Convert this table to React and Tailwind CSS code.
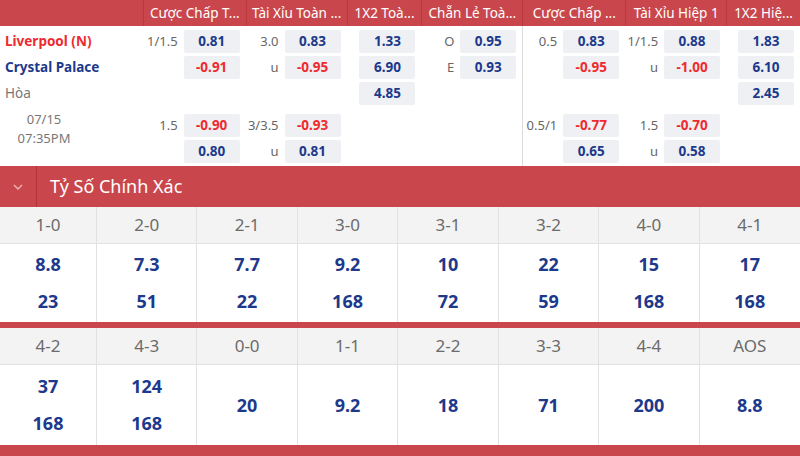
import React from "react";

const font = { fontFamily: '"Noto Sans", "Open Sans", Arial, sans-serif' };

const headers = [
  { label: "Cược Chấp T...", w: "w-[103px]" },
  { label: "Tài Xỉu Toàn ...", w: "w-[101px]" },
  { label: "1X2 Toà...", w: "w-[75px]" },
  { label: "Chẵn Lẻ Toà...", w: "w-[101px]" },
  { label: "Cược Chấp ...", w: "w-[103px]" },
  { label: "Tài Xỉu Hiệp 1", w: "w-[101px]" },
  { label: "1X2 Hiệ...", w: "w-[74px]" },
];

// each column: [row1, row2, row3, row4, row5], item = [label, value, red]
const columns = [
  [["1/1.5", "0.81"], ["", "-0.91", true], null, ["1.5", "-0.90", true], ["", "0.80"]],
  [["3.0", "0.83"], ["u", "-0.95", true], null, ["3/3.5", "-0.93", true], ["u", "0.81"]],
  [["", "1.33"], ["", "6.90"], ["", "4.85"], null, null],
  [["O", "0.95"], ["E", "0.93"], null, null, null],
  [["0.5", "0.83"], ["", "-0.95", true], null, ["0.5/1", "-0.77", true], ["", "0.65"]],
  [["1/1.5", "0.88"], ["u", "-1.00", true], null, ["1.5", "-0.70", true], ["u", "0.58"]],
  [["", "1.83"], ["", "6.10"], ["", "2.45"], null, null],
];

function Slot({ item }) {
  if (!item) return <div className="h-[23px]" />;
  const [label, value, red] = item;
  return (
    <div className="flex h-[23px] items-center justify-end">
      <span className="mr-[6px] text-[13px] text-[#666]">{label}</span>
      <div
        className={`flex h-[23px] w-[56px] items-center justify-center rounded-[2px] bg-[#eef0f3] text-[13.5px] font-bold ${
          red ? "text-[#ee2a2f]" : "text-[#1c398b]"
        }`}
      >
        {value}
      </div>
    </div>
  );
}

function OddsColumn({ rows, w, divider }) {
  return (
    <div className={`${w} flex flex-col gap-[3px] pt-[4px] ${divider ? "border-l border-[#dcdcdc]" : ""} pr-[6px]`}>
      <Slot item={rows[0]} />
      <Slot item={rows[1]} />
      <Slot item={rows[2]} />
      <div className="h-[3px]" />
      <Slot item={rows[3]} />
      <Slot item={rows[4]} />
    </div>
  );
}

const grid1 = [
  ["1-0", ["8.8", "23"]],
  ["2-0", ["7.3", "51"]],
  ["2-1", ["7.7", "22"]],
  ["3-0", ["9.2", "168"]],
  ["3-1", ["10", "72"]],
  ["3-2", ["22", "59"]],
  ["4-0", ["15", "168"]],
  ["4-1", ["17", "168"]],
];

const grid2 = [
  ["4-2", ["37", "168"]],
  ["4-3", ["124", "168"]],
  ["0-0", ["20"]],
  ["1-1", ["9.2"]],
  ["2-2", ["18"]],
  ["3-3", ["71"]],
  ["4-4", ["200"]],
  ["AOS", ["8.8"]],
];

function ScoreGrid({ data, valuesH }) {
  return (
    <div className="grid grid-cols-[97px_repeat(7,1fr)]">
      {data.map(([score, vals], i) => (
        <div key={score} className={`flex flex-col ${i < 7 ? "border-r border-[#e2e2e2]" : ""}`}>
          <div className="flex h-[37px] items-center justify-center border-b border-[#e2e2e2] bg-[#f3f3f3] text-[17px] text-[#6b6b6b]">
            {score}
          </div>
          <div className={`flex ${valuesH} flex-col items-center justify-center gap-[12px] bg-white`}>
            {vals.map((v, j) => (
              <div key={j} className="text-[18px] leading-[25px] font-bold text-[#1c398b]">
                {v}
              </div>
            ))}
          </div>
        </div>
      ))}
    </div>
  );
}

export default function App() {
  return (
    <div className="h-[456px] w-[800px] overflow-hidden bg-white" style={font}>
      {/* Odds header */}
      <div className="flex h-[26px] bg-[#c9474c] text-[13.5px] text-white">
        <div className="w-[143px]" />
        {headers.map((h) => (
          <div
            key={h.label}
            className={`${h.w} overflow-hidden whitespace-nowrap border-l border-[#b9393e] text-center leading-[26px]`}
          >
            {h.label}
          </div>
        ))}
      </div>

      {/* Odds body */}
      <div className="flex h-[140px]">
        <div className="flex w-[143px] flex-col gap-[3px] pt-[4px] pl-[5px] text-[13.5px]">
          <div className="h-[23px] font-bold leading-[23px] text-[#ee2a2f]">Liverpool (N)</div>
          <div className="h-[23px] font-bold leading-[23px] text-[#1c398b]">Crystal Palace</div>
          <div className="h-[23px] leading-[23px] text-[#777]">Hòa</div>
          <div className="w-[78px] pt-[2px] text-center text-[13px] leading-[19px] text-[#777]">
            <div>07/15</div>
            <div>07:35PM</div>
          </div>
        </div>
        {columns.map((rows, i) => (
          <OddsColumn key={i} rows={rows} w={headers[i].w} divider={i === 4} />
        ))}
      </div>

      {/* Correct score section */}
      <div className="flex h-[41px] items-center bg-[#c9474c]">
        <div className="flex h-full w-[37px] items-center justify-center border-r border-[#b23439]">
          <svg width="10" height="6" viewBox="0 0 10 6" fill="none">
            <path d="M1 1l4 4 4-4" stroke="#f0b4b6" strokeWidth="1.4" />
          </svg>
        </div>
        <div className="pl-[13px] text-[18px] text-white">Tỷ Số Chính Xác</div>
      </div>

      <ScoreGrid data={grid1} valuesH="h-[78px]" />
      <div className="h-[6px] bg-[#c9474c]" />
      <ScoreGrid data={grid2} valuesH="h-[80px]" />
      <div className="h-[11px] bg-[#c9474c]" />
    </div>
  );
}
